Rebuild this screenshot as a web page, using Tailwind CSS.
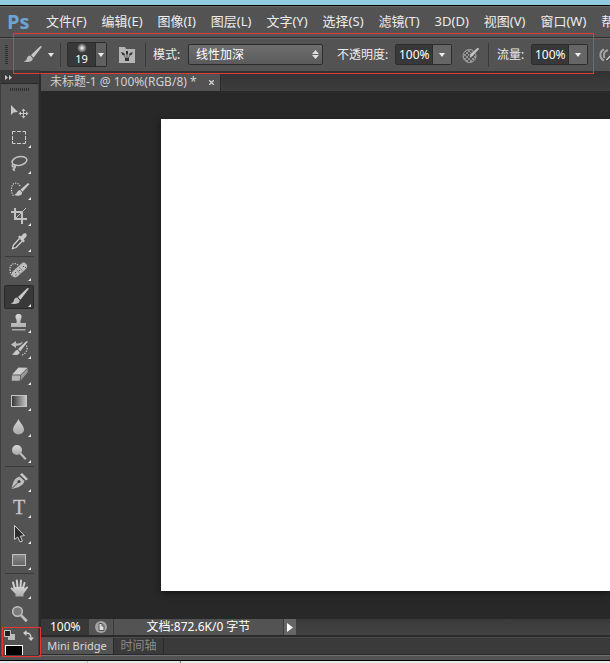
<!DOCTYPE html>
<html lang="zh-CN">
<head>
  <meta charset="UTF-8" />
  <meta name="viewport" content="width=device-width, initial-scale=1.0" />
  <title>未标题-1 @ 100%(RGB/8)</title>
  <script src="https://cdn.jsdelivr.net/npm/@tailwindcss/browser@4"></script>
</head>
<body class="h-screen flex flex-col overflow-hidden bg-[#535353] text-[#ececec] text-xs whitespace-nowrap font-['Noto_Sans','Noto_Sans_CJK_SC',sans-serif]">

  <!-- Shared icon parts -->
  <svg class="absolute w-0 h-0" aria-hidden="true">
    <defs>
      <linearGradient id="metal" x1="0" y1="0" x2="0" y2="1">
        <stop offset="0" stop-color="#d8d8d8" /><stop offset="1" stop-color="#a8a8a8" />
      </linearGradient>
      <linearGradient id="ramp">
        <stop offset="0" stop-color="#333" /><stop offset="1" stop-color="#c8c8c8" />
      </linearGradient>
      <linearGradient id="fade" x1="0" y1="0" x2="0" y2="1">
        <stop offset="0" stop-color="#8a8a8a" /><stop offset="1" stop-color="#666" />
      </linearGradient>
      <pattern id="checker" width="4" height="4" patternUnits="userSpaceOnUse">
        <rect width="4" height="4" fill="#929292" /><path d="M0 0h2v2H0zM2 2h2v2H2z" fill="#555" />
      </pattern>
      <path id="more" d="M24 19v3h-3z" fill="#e8e8e8" stroke="none" />
      <g id="brush">
        <path d="M22 3.5 20.5 3 11 12l2.500 2.800z" fill="#c9c9c9" />
        <path d="M10.300 12.600c-2.300.2-3 1.500-3.600 3.400-.5 1.300-1.700 2.100-3.200 2.300 3.500 1.500 9.200.5 9.300-2.900z" fill="#bdbdbd" />
      </g>
    </defs>
  </svg>

  <!-- Window edge -->
  <div class="shrink-0 h-1.5 bg-[#92cce0] border-b border-black"></div>

  <!-- Menu bar -->
  <nav class="shrink-0 h-[31px] flex items-center pl-[7px] bg-[#535353] border-t border-[#6b6b6b] text-[13px]">
    <span class="shrink-0 w-[39px] text-xl leading-6 font-bold text-[#6fa3d4] font-['Open_Sans',sans-serif]">Ps</span>
    <div class="flex gap-[15px]">
      <button>文件(F)</button>
      <button>编辑(E)</button>
      <button>图像(I)</button>
      <button>图层(L)</button>
      <button>文字(Y)</button>
      <button>选择(S)</button>
      <button>滤镜(T)</button>
      <button>3D(D)</button>
      <button>视图(V)</button>
      <button>窗口(W)</button>
      <button>帮助(H)</button>
    </div>
  </nav>

  <!-- Options bar -->
  <div class="relative shrink-0 h-[34px] flex items-center pl-[5px] border-t border-[#2e2e2e] bg-[#535353] shadow-[inset_0_1px_0_#646464] *:shrink-0">
    <div class="w-[3px] h-5 bg-[repeating-linear-gradient(#303030_0_1px,#535353_1px_2px)]"></div>
    <button class="flex items-center ml-3 gap-1" aria-label="画笔工具">
      <svg class="w-6 h-6" viewBox="0 0 24 24"><use href="#brush" /></svg>
      <svg class="w-1.5 h-1" viewBox="0 0 6 4"><path d="M0 0h6L3 4z" fill="#e8e8e8" /></svg>
    </button>
    <div class="w-px h-6 ml-1.5 bg-[#3a3a3a]"></div>
    <button class="flex w-10 h-[25px] ml-1.5 border border-[#2c2c2c] bg-[#383838] rounded-xs" aria-label="画笔大小">
      <span class="flex-1 flex flex-col items-center">
        <span class="w-2.5 h-2.5 rounded-full bg-[radial-gradient(#fff,#aaa_30%,#383838_70%)]"></span>
        <span class="text-[11px] leading-3 text-white">19</span>
      </span>
      <span class="w-[11px] h-full flex items-center justify-center bg-[#606060] border-l border-[#2c2c2c]">
        <svg class="w-1.5 h-1" viewBox="0 0 6 4"><path d="M0 0h6L3 4z" fill="#f0f0f0" /></svg>
      </span>
    </button>
    <button class="ml-3" aria-label="切换画笔面板">
      <svg class="w-4 h-4" viewBox="0 0 16 16">
        <path d="M0 0h6l1 2h9v14H0z" fill="#b5b5b5" />
        <path d="m2 5 3 1 1.500 2.500L3.500 8zM14 5l-3 1-1.500 2.500L12.500 8zM7 4h2v3.500H7z" fill="#333" />
        <path d="M5 8.500 7.500 12M11 8.500 8.500 12M8 8v4" stroke="#444" stroke-width=".8" />
        <rect x="6" y="11" width="4" height="3" fill="#333" />
      </svg>
    </button>
    <div class="w-px h-6 ml-2.5 bg-[#3a3a3a]"></div>
    <label for="mode" class="w-[42px] pl-[7px]">模式:</label>
    <div class="relative">
      <select id="mode" class="appearance-none block w-[135px] h-[21px] pl-[7px] leading-4 rounded-xs border border-[#2c2c2c] bg-linear-to-b from-[#6e6e6e] to-[#5b5b5b] text-white">
        <option>线性加深</option>
      </select>
      <svg class="absolute right-1 top-1.5 w-[7px] h-[9px] pointer-events-none" viewBox="0 0 7 9"><path d="M0 4h7L3.500 0zM0 5h7L3.500 9z" fill="#dedede" /></svg>
    </div>
    <label for="opacity" class="w-[72px] pl-3.5">不透明度:</label>
    <div class="flex h-[21px] border border-[#2c2c2c] rounded-xs">
      <input id="opacity" value="100%" class="w-[36px] pl-[3px] bg-[#383838] text-white" />
      <button class="w-[19px] flex items-center justify-center bg-[#666] border-l border-[#2c2c2c]" aria-label="不透明度滑块">
        <svg class="w-1.5 h-1" viewBox="0 0 6 4"><path d="M0 0h6L3 4z" fill="#f0f0f0" /></svg>
      </button>
    </div>
    <button class="ml-2.5" aria-label="压力控制不透明度">
      <svg class="w-[18px] h-[18px]" viewBox="0 0 18 18">
        <circle cx="7.500" cy="10" r="6.500" fill="url(#checker)" stroke="#a5a5a5" />
        <path d="m7 12 1-4 8-7 1.500 2-7.500 8z" fill="#c6c6c6" stroke="#444" stroke-width=".7" />
      </svg>
    </button>
    <div class="w-px h-6 ml-2 bg-[#3a3a3a]"></div>
    <label for="flow" class="w-[42px] pl-2">流量:</label>
    <div class="flex h-[21px] border border-[#2c2c2c] rounded-xs">
      <input id="flow" value="100%" class="w-[36px] pl-[3px] bg-[#383838] text-white" />
      <button class="w-[19px] flex items-center justify-center bg-[#666] border-l border-[#2c2c2c]" aria-label="流量滑块">
        <svg class="w-1.5 h-1" viewBox="0 0 6 4"><path d="M0 0h6L3 4z" fill="#f0f0f0" /></svg>
      </button>
    </div>
    <button class="ml-2.5" aria-label="喷枪">
      <svg class="w-[18px] h-[18px]" viewBox="0 0 18 18" fill="none">
        <path d="M6 3.500a6 6 0 0 0 0 11M10 4c-4 1-5 5-3.500 8" stroke="#a5a5a5" stroke-width="2" />
        <path d="m7 14 8-9 2 2-8 8z" fill="#c6c6c6" stroke="#333" stroke-width=".8" />
      </svg>
    </button>
    <div class="absolute z-10 left-[13px] -top-[5px] w-[581px] h-[41px] border border-[#e23a3a] pointer-events-none"></div>
  </div>

  <main class="flex-1 min-h-0 flex pl-px bg-[#2c2c2c]">

    <!-- Toolbox -->
    <aside class="relative w-[37px] mr-[3px] flex flex-col bg-[#535353] outline outline-[#3d3d3d]">
      <button class="shrink-0 h-[13px] pl-1 flex items-center bg-[#3a3a3a] border-b border-[#2a2a2a]" aria-label="展开面板">
        <svg class="w-[7px] h-[5px]" viewBox="0 0 7 5"><path d="m0 0 3 2.500L0 5zM4 0l3 2.500L4 5z" fill="#c9c9c9" /></svg>
      </button>
      <div class="shrink-0 w-[19px] h-[3px] mt-1 mb-2 ml-[9px] bg-[repeating-linear-gradient(90deg,#303030_0_1px,#535353_1px_2px)]"></div>

      <div class="shrink-0 grid auto-rows-[26px] justify-items-start pl-1.5">
        <button aria-label="移动工具">
          <svg class="w-6 h-6" viewBox="0 0 24 24" fill="none">
            <path d="M4 5v10l2.500-2.500L11 12z" fill="#c6c6c6" />
            <path d="M16.500 10v7M13 13.500h7" stroke="#c6c6c6" />
            <path d="m16.500 8.500 2 2.500h-4zM16.500 18.500l2-2.500h-4zM11.500 13.500 14 11.500v4zM21.500 13.500 19 11.500v4z" fill="#c6c6c6" />
          </svg>
        </button>
        <button aria-label="矩形选框工具">
          <svg class="w-6 h-6" viewBox="0 0 24 24" fill="none"><path d="M5.500 8.500v-3h3M10 5.500h4M15.500 5.500h3v3M18.500 10v4M18.500 15v2.500h-3M14 17.500h-4M8.500 17.500h-3V15M5.500 14v-4" stroke="#d0d0d0" /><use href="#more" /></svg>
        </button>
        <button aria-label="套索工具">
          <svg class="w-6 h-6" viewBox="0 0 24 24" fill="none" stroke="#c2c2c2" stroke-width="1.500">
            <ellipse cx="12.500" cy="9" rx="7.500" ry="4.300" transform="rotate(-12 12.500 9)" />
            <path d="M8 13.500c-.5-1.500-3-1.300-2.800.3s3 1.400 2.800-.3c.8 2-.5 3-1.500 3.500s.5 1.300 1.500 1.500" /><use href="#more" />
          </svg>
        </button>
        <button aria-label="快速选择工具">
          <svg class="w-6 h-6" viewBox="0 0 24 24" fill="none">
            <path d="M13 8c-1-3-6-4-7.500-1s-1.500 8 1 11" stroke="#d4d4d4" stroke-width="1.200" stroke-dasharray="1.200 1.200" />
            <path d="M22.500 6 21 5l-7.500 6.500 2 2.200zM13 12c-3 .3-2.700 4-6 5 3 1.500 8.500 1 8-2.500z" fill="#c9c9c9" /><use href="#more" />
          </svg>
        </button>
        <button aria-label="裁剪工具">
          <svg class="w-6 h-6" viewBox="0 0 24 24" fill="none"><path d="M8 4v11h12M4 8h11v12" stroke="#c2c2c2" stroke-width="2" /><path d="m9 14 10-10" stroke="#c2c2c2" /><use href="#more" /></svg>
        </button>
        <button aria-label="吸管工具">
          <svg class="w-6 h-6" viewBox="0 0 24 24" fill="none">
            <path d="M12.500 8.500 6.500 15l-1 3.500 3.500-1 6-6.200" fill="#4a4a4a" stroke="#d2d2d2" stroke-width="1.300" />
            <path d="m11 7 1.500-1.500 1.500 1 2-2.500c2.500-2 5 .5 3 3L16.800 9.200l1 1.800-1.500 1.500z" fill="#c9c9c9" /><use href="#more" />
          </svg>
        </button>
      </div>

      <div class="shrink-0 h-px my-px mx-1 bg-[#3a3a3a]"></div>

      <div class="shrink-0 grid auto-rows-[26px] justify-items-start pl-1.5">
        <button aria-label="污点修复画笔工具">
          <svg class="w-6 h-6" viewBox="0 0 24 24" fill="none">
            <path d="M11 6C8 3 3 5 3 10s2 7 4 7.500" stroke="#d8d8d8" stroke-width="1.200" stroke-dasharray="1.200 1.200" />
            <rect x="3.500" y="7.500" width="18" height="7" rx="3.500" fill="#bdbdbd" transform="rotate(-42 12.500 11)" />
            <path d="m9.500 10.500 4 4.500M12 8l4 4.500" stroke="#777" stroke-width=".8" />
            <path d="M12 11h1v1h-1zM16 7h1v1h-1zM18 8h1v1h-1zM8 13h1v1H8zM8.500 15.500h1v1h-1z" fill="#555" /><use href="#more" />
          </svg>
        </button>
        <button class="w-[30px] h-6 -ml-[3px] my-px flex items-center justify-center rounded-xs border border-[#292929] bg-[#393939]" aria-label="画笔工具" aria-pressed="true">
          <svg class="w-6 h-6 shrink-0" viewBox="0 0 24 24"><use href="#brush" /><use href="#more" /></svg>
        </button>
        <button aria-label="仿制图章工具">
          <svg class="w-6 h-6" viewBox="0 0 24 24"><path d="M11.500 3c3 0 3.700 2.300 2.700 4.500-.8 1.500-1 3.500-.5 4.500H19v4H4v-4h5.500c.5-1 .2-3-.6-4.500C8 5.300 8.500 3 11.500 3zM5 18h13.500v1.500H5z" fill="url(#metal)" /><use href="#more" /></svg>
        </button>
        <button aria-label="历史记录画笔工具">
          <svg class="w-6 h-6" viewBox="0 0 24 24" fill="none">
            <path d="m4 7.500 5-3.500v2.300c2.500.5 5-.1 7-1.800-.8 3-4 4.500-7 4.200V11z" fill="#bdbdbd" />
            <path d="M21 4.500 19.500 4 11 12l2.300 2.300zM10.500 12.700c-3 .3-2.500 3.800-6 4.600 3 1.500 8.500 1 8-2.300z" fill="#c9c9c9" />
            <path d="M19.500 8.500c2 4-1 9-5.500 10" stroke="#d4d4d4" stroke-width="1.200" stroke-dasharray="1.300 1.300" /><use href="#more" />
          </svg>
        </button>
        <button aria-label="橡皮擦工具">
          <svg class="w-6 h-6" viewBox="0 0 24 24"><path d="m11.500 4.500 9 .3-6.800 7H5z" fill="#cdcdcd" /><path d="m21 5-.5 4.500-7 8.300.5-6z" fill="#979797" /><path d="M5 12.300h8.300l-.6 5.500H4.800z" fill="#b4b4b4" /><path d="M5 12h8.700L21 5" stroke="#666" stroke-width=".7" fill="none" /><use href="#more" /></svg>
        </button>
        <button aria-label="渐变工具">
          <svg class="w-6 h-6" viewBox="0 0 24 24"><rect x="4.500" y="6.500" width="15" height="11" fill="url(#ramp)" stroke="#c6c6c6" /><use href="#more" /></svg>
        </button>
        <button aria-label="模糊工具">
          <svg class="w-6 h-6" viewBox="0 0 24 24"><path d="M11.500 4c1 3.500 5.500 6.500 5.500 10.500a5.500 5 0 0 1-11 0C6 10.500 10.500 7.500 11.500 4z" fill="url(#metal)" /><use href="#more" /></svg>
        </button>
        <button aria-label="减淡工具">
          <svg class="w-6 h-6" viewBox="0 0 24 24"><circle cx="10" cy="9" r="5" fill="url(#metal)" /><path d="m12.500 13 1.500-1.500 5.500 6-1.500 1.500z" fill="#bdbdbd" /><use href="#more" /></svg>
        </button>
      </div>

      <div class="shrink-0 h-px mb-px mx-1 bg-[#3a3a3a]"></div>

      <div class="shrink-0 grid auto-rows-[26px] justify-items-start pl-1.5 pt-px">
        <button aria-label="钢笔工具">
          <svg class="w-6 h-6" viewBox="0 0 24 24" fill="none">
            <path d="M12.500 6.500c-5 1.500-6.500 5.500-8 12.500 7-1.500 11.500-3 13-8z" fill="#bdbdbd" />
            <path d="M5 18.500 11.500 12" stroke="#444" /><circle cx="12" cy="11.500" r="1.500" fill="#444" />
            <path d="m13 4.500 2-1.500 6 6-2 1.500z" fill="#c9c9c9" /><use href="#more" />
          </svg>
        </button>
        <button aria-label="横排文字工具">
          <svg class="w-6 h-6" viewBox="0 0 24 24"><text x="12" y="18" text-anchor="middle" font-size="20" class="font-['Liberation_Serif',serif]" fill="#c6c6c6" stroke="#c6c6c6" stroke-width=".3">T</text><use href="#more" /></svg>
        </button>
        <button aria-label="路径选择工具">
          <svg class="w-6 h-6" viewBox="0 0 24 24"><path d="M7.500 3.500v14l3.200-2.500 2.300 5 2.500-1-2.200-4.700 4.200-.8z" fill="#2d2d2d" stroke="#cfcfcf" /><use href="#more" /></svg>
        </button>
        <button aria-label="矩形工具">
          <svg class="w-6 h-6" viewBox="0 0 24 24"><rect x="5.500" y="6.500" width="13" height="11" fill="url(#fade)" stroke="#c0c0c0" /><use href="#more" /></svg>
        </button>
      </div>

      <div class="shrink-0 h-px mb-0.5 mx-1 bg-[#3a3a3a]"></div>

      <div class="shrink-0 grid auto-rows-[26px] justify-items-start pl-1.5">
        <button aria-label="抓手工具">
          <svg class="w-6 h-6" viewBox="0 0 24 24" fill="none">
            <path d="M7.500 11 6 5.500M10.500 10 9.800 3.500M13.500 10l.5-6.500M16 11l1.500-5" stroke="#cfcfcf" stroke-width="2" stroke-linecap="round" />
            <path d="M6.500 10h10.700l.3 1.500 2-1.800c1.200-.7 2 .3 1.200 1.300L16.500 17v2.500H8.500V17c-1.500-1.500-3-3.500-4.700-5-.7-1 .3-2 1.300-1.300l2 1.300z" fill="url(#metal)" /><use href="#more" />
          </svg>
        </button>
        <button aria-label="缩放工具">
          <svg class="w-6 h-6" viewBox="0 0 24 24"><circle cx="10.500" cy="8.500" r="4.800" fill="#7a7a7a" stroke="#c0c0c0" stroke-width="1.500" /><path d="m13 13 1.800-1.800 6 6-2 2z" fill="#bdbdbd" /></svg>
        </button>
      </div>

      <!-- Colour swatches -->
      <div class="flex-1 min-h-0 overflow-hidden">
        <div class="flex gap-2 pl-[3px] pt-0.5">
          <button aria-label="默认前景色和背景色">
            <svg class="w-[11px] h-[11px]" viewBox="0 0 11 11"><path d="M4 4h7v6H4z" fill="#bbb" /><path d="M.5.500h6v6h-6z" fill="#222" stroke="#c6c6c6" /></svg>
          </button>
          <button aria-label="切换前景色和背景色">
            <svg class="w-[11px] h-[11px]" viewBox="0 0 11 11" fill="none"><path d="M3 3c3 0 5 1.500 5 5" stroke="#d0d0d0" stroke-width="1.300" /><path d="M0 3 3.500 0v6zM8 11 5 7.500h6z" fill="#d0d0d0" /></svg>
          </button>
        </div>
        <button class="block w-[18px] h-5 mt-1 ml-1 bg-black border border-white" aria-label="前景色"></button>
      </div>
      <div class="absolute left-px -bottom-0.5 w-[39px] h-[30px] z-10 border border-[#e8352e] pointer-events-none"></div>
    </aside>

    <!-- Document -->
    <div class="flex-1 min-w-0 flex flex-col">
      <div class="shrink-0 h-5 flex items-end bg-linear-to-b from-[#323232] to-[#3e3e3e]">
        <div class="h-[18px] flex items-center gap-3 pl-[9px] pr-1.5 bg-[#535353] border-r border-[#2a2a2a] text-[#d0d0d0]">
          <span>未标题-1 @ 100%(RGB/8) *</span>
          <button aria-label="关闭"><svg class="w-[5px] h-[5px]" viewBox="0 0 5 5"><path d="m0 0 5 5M5 0 0 5" stroke="#d0d0d0" stroke-width="1.300" /></svg></button>
        </div>
      </div>

      <div class="flex-1 min-h-0 flex pt-7 pb-7 pl-[120px] bg-[#282828]">
        <div class="flex-1 bg-white shadow-[0_2px_6px_#151515]"></div>
      </div>

      <!-- Status bar -->
      <div class="shrink-0 h-[17px] flex bg-linear-to-b from-[#3a3a3a] to-[#434343] border-b border-[#2a2a2a] text-white">
        <input aria-label="缩放比例" value="100%" class="w-12 pl-[9px] bg-[#383838]" />
        <button class="w-6 flex items-center justify-center bg-[#535353]" aria-label="导出">
          <svg class="w-3 h-3" viewBox="0 0 12 12"><circle cx="6" cy="6" r="6" fill="#a5a5a5" /><path d="M4 2.500h3l2 2v5H4z" fill="#ddd" stroke="#555" /><path d="M7 2.500v2.500h2" stroke="#555" fill="none" /></svg>
        </button>
        <div class="w-[171px] flex items-center justify-center bg-[#535353] border-x border-[#3a3a3a]">文档:872.6K/0 字节</div>
        <button class="w-3 flex items-center justify-center bg-[#666]" aria-label="状态选项">
          <svg class="w-1.5 h-[9px]" viewBox="0 0 6 9"><path d="M0 0v9l6-4.500z" fill="#fff" /></svg>
        </button>
      </div>

      <!-- Panel tabs -->
      <div class="shrink-0 h-[19px] pt-0.5 flex bg-[#3a3a3a] border-b border-[#2a2a2a] shadow-[inset_0_1px_0_#2a2a2a,inset_0_2px_0_#4c4c4c]">
        <button class="w-[72px] bg-[#535353] text-[11px] text-[#d8d8d8]">Mini Bridge</button>
        <button class="w-[51px] border-x border-[#2a2a2a] text-[#8a8a8a]">时间轴</button>
      </div>
    </div>
  </main>

  <!-- Bottom edge -->
  <div class="shrink-0 h-1.5 bg-[#535353] border-t border-[#707070] border-b border-b-black"></div>
  <div class="shrink-0 h-[2px] flex bg-[#e6e6e6]">
    <div class="w-[88px] border-r border-[#bbb]"></div>
    <div class="w-[93px] border-r border-[#777]"></div>
  </div>

</body>
</html>
